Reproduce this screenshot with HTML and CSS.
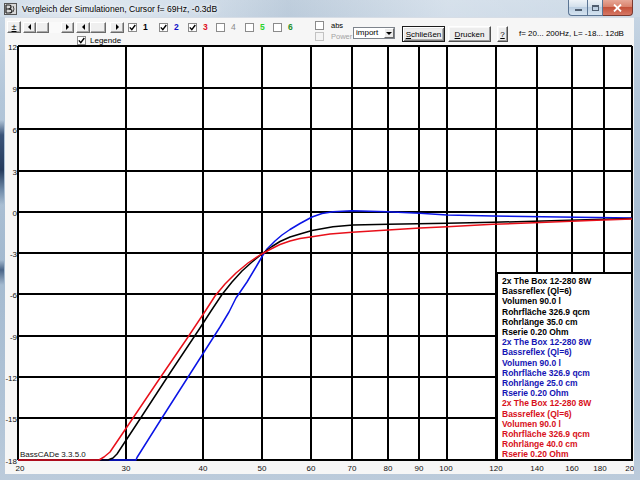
FILE: index.html
```html
<!DOCTYPE html>
<html>
<head>
<meta charset="utf-8">
<link rel="stylesheet" href="styles.css">
</head>
<body>
<div class="window">
  <div class="titlebar">
    <svg class="app-icon" width="13" height="12" viewBox="0 0 13 12">
      <rect x="0.5" y="0.5" width="12" height="11" fill="#d8d8d8" stroke="#555"/>
      <path d="M2 2 L2 10 M2 2 L5 2 Q7 2 7 4 Q7 6 4 6 L2 6 M4 6 Q8 6 8 8 Q8 10 5 10 L2 10" stroke="#222" stroke-width="1.2" fill="none"/>
      <path d="M9 3 Q11 6 9 9" stroke="#444" fill="none"/>
    </svg>
    <span class="title">Vergleich der Simulationen, Cursor f= 69Hz, -0.3dB</span>
    <div class="caption">
      <span class="cap-btn min"><span class="g-min"></span></span>
      <span class="cap-btn max"><span class="g-max"></span></span>
      <span class="cap-btn close">
        <svg width="9" height="8" viewBox="0 0 9 8"><path d="M1 0.5 L8 7.5 M8 0.5 L1 7.5" stroke="#fff" stroke-width="1.8"/></svg>
      </span>
    </div>
  </div>
  <div class="frame">
    <div class="client">
      <div class="toolbar">
        <div class="tb-left">
          <div class="row1">
            <span class="btn3d pm">±</span>
            <div class="scroll s1">
              <span class="btn3d arr"><span class="tri-l"></span></span>
              <span class="btn3d thumb t1"></span>
              <span class="track"></span>
              <span class="btn3d arr"><span class="tri-r"></span></span>
            </div>
            <div class="scroll s2">
              <span class="btn3d arr"><span class="tri-l"></span></span>
              <span class="btn3d thumb t2"></span>
              <span class="track"></span>
              <span class="btn3d arr"><span class="tri-r"></span></span>
            </div>
            <div class="checks">
              <span class="chk"><span class="box"><svg width="7" height="7" viewBox="0 0 7 7"><path d="M0.8 3.4 L2.8 5.6 L6.3 1" stroke="#000" stroke-width="1.4" fill="none"/></svg></span><span class="num n1">1</span></span>
              <span class="chk"><span class="box"><svg width="7" height="7" viewBox="0 0 7 7"><path d="M0.8 3.4 L2.8 5.6 L6.3 1" stroke="#000" stroke-width="1.4" fill="none"/></svg></span><span class="num n2">2</span></span>
              <span class="chk"><span class="box"><svg width="7" height="7" viewBox="0 0 7 7"><path d="M0.8 3.4 L2.8 5.6 L6.3 1" stroke="#000" stroke-width="1.4" fill="none"/></svg></span><span class="num n3">3</span></span>
              <span class="chk"><span class="box"></span><span class="num n4">4</span></span>
              <span class="chk"><span class="box"></span><span class="num n5">5</span></span>
              <span class="chk"><span class="box"></span><span class="num n6">6</span></span>
            </div>
          </div>
          <div class="row2">
            <span class="box"><svg width="7" height="7" viewBox="0 0 7 7"><path d="M0.8 3.4 L2.8 5.6 L6.3 1" stroke="#000" stroke-width="1.4" fill="none"/></svg></span>
            <span class="lbl">Legende</span>
          </div>
        </div>
        <div class="opts">
          <div class="opt"><span class="box"></span><span class="opt-lbl">abs</span></div>
          <div class="opt disabled"><span class="box"></span><span class="opt-lbl">Power</span></div>
        </div>
        <div class="combo"><span class="combo-text">import</span><span class="combo-btn"><span class="tri-d"></span></span></div>
        <button class="pbtn default"><u>S</u>chließen</button>
        <button class="pbtn print"><u>D</u>rucken</button>
        <button class="pbtn help"><u>?</u></button>
        <span class="range">f= 20... 200Hz, L= -18... 12dB</span>
      </div>
      <div class="chart">
        <svg class="plot" width="629" height="428" viewBox="5 46 629 428">
          <defs>
            <clipPath id="clipx"><rect x="5" y="440" width="629" height="40"/></clipPath>
          </defs>
          <rect x="18" y="46" width="614" height="414" fill="#fff"/>
          <g class="grid">
            <line x1="18" y1="46" x2="632" y2="46"/>
            <line x1="18" y1="88" x2="632" y2="88"/>
            <line x1="18" y1="129" x2="632" y2="129"/>
            <line x1="18" y1="171" x2="632" y2="171"/>
            <line x1="18" y1="212" x2="632" y2="212"/>
            <line x1="18" y1="253" x2="632" y2="253"/>
            <line x1="18" y1="294" x2="632" y2="294"/>
            <line x1="18" y1="336" x2="632" y2="336"/>
            <line x1="18" y1="377" x2="632" y2="377"/>
            <line x1="18" y1="418" x2="632" y2="418"/>
            <line x1="18" y1="460" x2="632" y2="460"/>
            <line x1="18" y1="46" x2="18" y2="460"/>
            <line x1="126" y1="46" x2="126" y2="460"/>
            <line x1="203" y1="46" x2="203" y2="460"/>
            <line x1="262" y1="46" x2="262" y2="460"/>
            <line x1="311" y1="46" x2="311" y2="460"/>
            <line x1="352" y1="46" x2="352" y2="460"/>
            <line x1="388" y1="46" x2="388" y2="460"/>
            <line x1="419" y1="46" x2="419" y2="460"/>
            <line x1="447" y1="46" x2="447" y2="460"/>
            <line x1="496" y1="46" x2="496" y2="460"/>
            <line x1="537" y1="46" x2="537" y2="460"/>
            <line x1="572" y1="46" x2="572" y2="460"/>
            <line x1="604" y1="46" x2="604" y2="460"/>
            <line x1="632" y1="46" x2="632" y2="460"/>
          </g>
          <g class="axis ylab">
            <text x="17" y="50">12</text>
            <text x="17" y="92">9</text>
            <text x="17" y="133">6</text>
            <text x="17" y="175">3</text>
            <text x="17" y="216">0</text>
            <text x="17" y="257">-3</text>
            <text x="17" y="298">-6</text>
            <text x="17" y="340">-9</text>
            <text x="17" y="381">-12</text>
            <text x="17" y="422">-15</text>
            <text x="17" y="464">-18</text>
          </g>
          <g class="axis xlab" clip-path="url(#clipx)">
            <text x="20" y="471">20</text>
            <text x="126" y="471">30</text>
            <text x="203" y="471">40</text>
            <text x="262" y="471">50</text>
            <text x="311" y="471">60</text>
            <text x="352" y="471">70</text>
            <text x="388" y="471">80</text>
            <text x="419" y="471">90</text>
            <text x="446" y="471">100</text>
            <text x="496" y="471">120</text>
            <text x="537" y="471">140</text>
            <text x="572" y="471">160</text>
            <text x="600" y="471">180</text>
            <text x="632" y="471">200</text>
          </g>
          <text class="axis version" x="20" y="457">BassCADe 3.3.5.0</text>
          <polyline class="curve c-blue" points="18,460 136,460 137,457.5 160,421 190,374 220,327 229,312 236,298 247,282 256,267 263,255 267,249 275,241 282,235 290,229.5 300,223.5 312,217 322,213.5 333,211.7 352,210.7 387,211.7 420,213.3 447,215 493,216 560,217 632,218"/>
          <polyline class="curve c-black" points="18,460 108,460 113,458 117,454 140,419 170,373 200,328 211,311 222,294.5 232,282 242,271 252,262 263,253 272,246.5 280,241.5 290,237 300,234 312,230.5 333,226.7 353,225 388,224.3 447,223.3 493,222.3 560,220.5 632,218.5"/>
          <polyline class="curve c-red" points="18,460 99,460 104,457 110,452 131,421 160,378 186,340 206,310 215,296 225,284 236,273 248,263 260,255 270,249.5 280,244.5 290,241 300,238.5 312,236.7 330,234 352,232.3 388,230 420,228 447,226.7 493,224.3 540,222.5 590,220.5 632,219"/>
        </svg>
        <div class="legend">
          <div class="lg-black">2x The Box 12-280 8W</div>
          <div class="lg-black">Bassreflex (Ql=6)</div>
          <div class="lg-black">Volumen 90.0 l</div>
          <div class="lg-black">Rohrfläche 326.9 qcm</div>
          <div class="lg-black">Rohrlänge 35.0 cm</div>
          <div class="lg-black">Rserie 0.20 Ohm</div>
          <div class="lg-blue">2x The Box 12-280 8W</div>
          <div class="lg-blue">Bassreflex (Ql=6)</div>
          <div class="lg-blue">Volumen 90.0 l</div>
          <div class="lg-blue">Rohrfläche 326.9 qcm</div>
          <div class="lg-blue">Rohrlänge 25.0 cm</div>
          <div class="lg-blue">Rserie 0.20 Ohm</div>
          <div class="lg-red">2x The Box 12-280 8W</div>
          <div class="lg-red">Bassreflex (Ql=6)</div>
          <div class="lg-red">Volumen 90.0 l</div>
          <div class="lg-red">Rohrfläche 326.9 qcm</div>
          <div class="lg-red">Rohrlänge 40.0 cm</div>
          <div class="lg-red">Rserie 0.20 Ohm</div>
        </div>
      </div>
    </div>
  </div>
</div>
</body>
</html>
```

FILE: styles.css
```css
html, body {
  margin: 0;
  padding: 0;
}
body {
  width: 640px;
  height: 480px;
  overflow: hidden;
  font-family: "Liberation Sans", Arial, sans-serif;
  color: #000;
}
.window {
  width: 640px;
  height: 480px;
  display: flex;
  flex-direction: column;
  background:
    linear-gradient(180deg, transparent 0, transparent 120px, #3a5378 135px, #243a5c 170px, #6f8aa8 190px, transparent 205px, transparent 260px, #4a6487 270px, transparent 285px) 0 0 / 4px 100% no-repeat,
    linear-gradient(180deg, #c9d7e5 0, #b3c6d9 20%, #a3b9cf 55%, #b0c3d6 85%, #bccbdb 100%);
}
.titlebar {
  height: 17px;
  flex: none;
  display: flex;
  align-items: center;
  background: linear-gradient(90deg, rgba(255,255,255,0.15), rgba(255,255,255,0.45) 12%, rgba(255,255,255,0.2) 30%, rgba(120,140,160,0.12) 45%, rgba(255,255,255,0.25) 70%, rgba(255,255,255,0.1));
}
.app-icon {
  margin-left: 4px;
  flex: none;
}
.title {
  margin-left: 5px;
  font-size: 8.6px;
  white-space: nowrap;
  text-shadow: 0 0 4px #fff, 0 0 6px #fff;
}
.caption {
  margin-left: auto;
  margin-right: 7px;
  align-self: flex-start;
  display: flex;
}
.cap-btn {
  box-sizing: border-box;
  height: 16px;
  display: flex;
  align-items: center;
  justify-content: center;
  border: 1px solid #5b7594;
  border-top: none;
  background: linear-gradient(180deg, #eef3f8 0, #d3e0ec 45%, #bccfe2 50%, #d5e3f0 100%);
}
.min {
  width: 19px;
  border-right: none;
  border-radius: 0 0 0 4px;
}
.max {
  width: 16px;
}
.close {
  width: 30px;
  border-left: none;
  border-color: #7b3a30;
  border-radius: 0 0 4px 0;
  background: linear-gradient(180deg, #e7a797 0, #d9826d 45%, #c4513a 50%, #d67764 100%);
}
.g-min {
  width: 7px;
  height: 2px;
  background: #4f5e70;
  margin-top: 5px;
}
.g-max {
  width: 7px;
  height: 6px;
  box-sizing: border-box;
  border: 1px solid #4f5e70;
  border-top-width: 2px;
}
.frame {
  flex: 1;
  display: flex;
  padding: 0 6px 6px 5px;
}
.client {
  flex: 1;
  display: flex;
  flex-direction: column;
  background: #f6f6f6;
}
.toolbar {
  height: 29px;
  flex: none;
  display: flex;
  align-items: flex-start;
  font-size: 8px;
  border-top: 1px solid #d6dde6;
  box-sizing: border-box;
}
.tb-left {
  width: 310px;
  flex: none;
  padding-top: 3px;
}
.row1 {
  display: flex;
  align-items: center;
  height: 12px;
}
.btn3d {
  box-sizing: border-box;
  display: flex;
  align-items: center;
  justify-content: center;
  background: #efefef;
  border: 1px solid;
  border-color: #ffffff #6a6a6a #6a6a6a #ffffff;
  box-shadow: inset -1px -1px #a9a9a9;
}
.pm {
  margin-left: 2px;
  width: 14px;
  height: 12px;
  font-size: 9px;
  line-height: 1;
  text-decoration: underline;
}
.scroll {
  display: flex;
  height: 11px;
  margin-left: 2px;
  background: #f3f3f3;
}
.s1 { width: 51px; }
.s2 { width: 48px; }
.arr {
  width: 13px;
  height: 11px;
}
.s2 .arr { width: 14px; }
.thumb { height: 11px; }
.t1 { width: 13px; }
.t2 { width: 16px; }
.track {
  flex: 1;
  background: #fafafa;
}
.tri-l, .tri-r {
  width: 0;
  height: 0;
  border-top: 3px solid transparent;
  border-bottom: 3px solid transparent;
}
.tri-l { border-right: 3px solid #000; }
.tri-r { border-left: 3px solid #000; }
.checks {
  margin-left: 4px;
  display: grid;
  grid-template-columns: 31px 29px 28px 29px 28px 29px;
  align-items: center;
}
.chk {
  display: flex;
  align-items: center;
}
.box {
  width: 9px;
  height: 9px;
  box-sizing: border-box;
  border: 1px solid #8b8b8b;
  background: #fff;
  display: flex;
  align-items: center;
  justify-content: center;
  flex: none;
}
.box svg { display: block; }
.num {
  margin-left: 6px;
  font-size: 8.5px;
  font-weight: bold;
  line-height: 10px;
}
.n1 { color: #000; }
.n2 { color: #1010c8; }
.n3 { color: #e01020; }
.n4 { color: #8a8a8a; font-weight: normal; }
.n5 { color: #2ad42a; }
.n6 { color: #1f8f2a; }
.row2 {
  display: flex;
  align-items: center;
  margin-left: 72px;
  margin-top: 3px;
  height: 9px;
}
.lbl {
  margin-left: 4px;
  font-size: 8px;
}
.opts {
  width: 38px;
  flex: none;
  padding-top: 3px;
  display: flex;
  flex-direction: column;
  gap: 2px;
}
.opt {
  display: flex;
  align-items: center;
  height: 9px;
}
.opt-lbl {
  margin-left: 7px;
  font-size: 7.5px;
  line-height: 9px;
}
.disabled .box {
  border-color: #c2c2c2;
  background: #f4f4f4;
}
.disabled .opt-lbl { color: #a3a3a3; }
.combo {
  width: 42px;
  height: 12px;
  margin-top: 9px;
  box-sizing: border-box;
  border: 1px solid #7e848c;
  background: #fff;
  display: flex;
  align-items: center;
  flex: none;
}
.combo-text {
  flex: 1;
  padding-left: 2px;
  font-size: 8px;
  line-height: 10px;
}
.combo-btn {
  width: 10px;
  height: 10px;
  box-sizing: border-box;
  display: flex;
  align-items: center;
  justify-content: center;
  background: #ececec;
  border: 1px solid;
  border-color: #fff #6a6a6a #6a6a6a #fff;
}
.tri-d {
  width: 0;
  height: 0;
  border-left: 3px solid transparent;
  border-right: 3px solid transparent;
  border-top: 3px solid #000;
}
.pbtn {
  margin: 8px 0 0 0;
  padding: 0;
  height: 16px;
  box-sizing: border-box;
  font-family: "Liberation Sans", Arial, sans-serif;
  font-size: 8px;
  color: #000;
  background: #ededed;
  border: 1px solid;
  border-color: #ffffff #505050 #505050 #ffffff;
  box-shadow: inset -1px -1px #9a9a9a, inset 1px 1px #f8f8f8;
  flex: none;
}
.default {
  width: 43px;
  margin-left: 7px;
  border-color: #1c1c1c;
  box-shadow: inset 1px 1px #ffffff, inset -1px -1px #7a7a7a, inset 2px 2px #e6e6e6, inset -2px -2px #b0b0b0;
}
.print {
  width: 43px;
  margin-left: 3px;
}
.help {
  width: 11px;
  margin-left: 6px;
}
.range {
  margin-left: 11px;
  margin-top: 11px;
  font-size: 8px;
  line-height: 10px;
  white-space: nowrap;
}
.chart {
  position: relative;
  flex: 1;
}
.plot {
  display: block;
  overflow: visible;
}
.grid line {
  stroke: #000;
  stroke-width: 2;
}
.axis {
  font-family: "Liberation Sans", Arial, sans-serif;
  font-size: 8px;
  fill: #111;
}
.ylab text { text-anchor: end; }
.xlab text { text-anchor: middle; }
.curve {
  fill: none;
  stroke-width: 1.5;
  stroke-linejoin: round;
}
.c-blue { stroke: #0a14e6; }
.c-black { stroke: #000; }
.c-red { stroke: #e8101a; }
.legend {
  position: absolute;
  left: 491px;
  top: 226px;
  width: 137px;
  height: 189px;
  box-sizing: border-box;
  border: 2px solid #000;
  background: #fff;
  padding: 2px 0 0 4px;
  font-size: 8.5px;
  font-weight: bold;
  line-height: 10.2px;
  white-space: nowrap;
  overflow: hidden;
}
.lg-black { color: #000; }
.lg-blue { color: #1414b4; }
.lg-red { color: #d81020; }
```
